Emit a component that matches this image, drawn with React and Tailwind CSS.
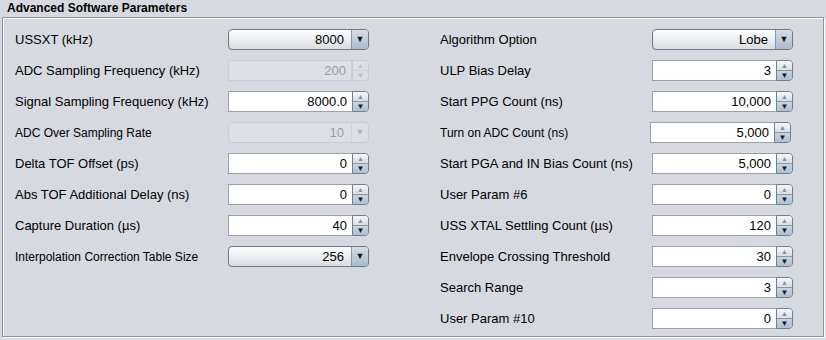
import React from 'react';

const font = { fontFamily: '"Liberation Sans", Arial, sans-serif' };

const leftRows = [
  { label: 'USSXT (kHz)', kind: 'combo', value: '8000' },
  { label: 'ADC Sampling Frequency (kHz)', kind: 'spin', value: '200', disabled: true },
  { label: 'Signal Sampling Frequency (kHz)', kind: 'spin', value: '8000.0' },
  { label: 'ADC Over Sampling Rate', kind: 'combo', value: '10', disabled: true, small: true },
  { label: 'Delta TOF Offset (ps)', kind: 'spin', value: '0' },
  { label: 'Abs TOF Additional Delay (ns)', kind: 'spin', value: '0' },
  { label: 'Capture Duration (µs)', kind: 'spin', value: '40' },
  { label: 'Interpolation Correction Table Size', kind: 'combo', value: '256', small: true },
];

const rightRows = [
  { label: 'Algorithm Option', kind: 'combo', value: 'Lobe' },
  { label: 'ULP Bias Delay', kind: 'spin', value: '3' },
  { label: 'Start PPG Count (ns)', kind: 'spin', value: '10,000' },
  { label: 'Turn on ADC Count (ns)', kind: 'spin', value: '5,000', small: true, shift: true },
  { label: 'Start PGA and IN Bias Count (ns)', kind: 'spin', value: '5,000' },
  { label: 'User Param #6', kind: 'spin', value: '0' },
  { label: 'USS XTAL Settling Count (µs)', kind: 'spin', value: '120' },
  { label: 'Envelope Crossing Threshold', kind: 'spin', value: '30' },
  { label: 'Search Range', kind: 'spin', value: '3' },
  { label: 'User Param #10', kind: 'spin', value: '0' },
];

function Spin({ value, disabled }) {
  return (
    <div className="flex h-[21px] w-[141px]">
      <div
        className={
          'flex-1 flex items-center justify-end pr-[5px] text-[13px] border ' +
          (disabled
            ? 'bg-[#dcdfe4] border-[#c9ccd2] text-[#9a9da3]'
            : 'bg-white border-[#9aa0a8] border-r-0 text-black')
        }
      >
        {value}
      </div>
      <div
        className={
          'w-[17px] flex flex-col border rounded-r-[4px] overflow-hidden ' +
          (disabled ? 'border-[#c9ccd2] bg-[#dcdfe4]' : 'border-[#6f7f8f]')
        }
      >
        <div
          className={
            'flex-1 flex items-center justify-center text-[7px] leading-none ' +
            (disabled ? 'text-[#bfc2c8]' : 'bg-gradient-to-b from-[#f4f6f8] to-[#d8dee5] text-[#8a8f96]')
          }
        >
          ▲
        </div>
        <div
          className={
            'flex-1 flex items-center justify-center text-[8px] leading-none ' +
            (disabled ? 'text-[#bfc2c8] border-t border-[#d0d3d8]' : 'bg-gradient-to-b from-[#c9d6e2] to-[#aebfcf] text-[#1a1a1a] border-t border-[#8797a6]')
          }
        >
          ▼
        </div>
      </div>
    </div>
  );
}

function Combo({ value, disabled }) {
  return (
    <div
      className={
        'flex h-[21px] w-[141px] rounded-[4px] border overflow-hidden ' +
        (disabled ? 'border-[#c9ccd2] bg-[#dcdfe4]' : 'border-[#6f7780] bg-gradient-to-b from-[#fbfcfd] via-[#eceef1] to-[#d9dce1]')
      }
    >
      <div
        className={
          'flex-1 flex items-center justify-end pr-[7px] text-[13px] ' +
          (disabled ? 'text-[#9a9da3]' : 'text-black')
        }
      >
        {value}
      </div>
      <div
        className={
          'w-[17px] flex items-center justify-center text-[9px] border-l ' +
          (disabled
            ? 'border-[#d0d3d8] text-[#b0b3b9]'
            : 'border-[#8797a6] bg-gradient-to-b from-[#d3dde7] to-[#a9bccd] text-[#1a1a1a]')
        }
      >
        ▼
      </div>
    </div>
  );
}

function Row({ row, labelWidth }) {
  return (
    <div className="flex items-center h-[31px]">
      <div
        className={(row.small ? 'text-[12px]' : 'text-[13px]') + ' text-black whitespace-nowrap'}
        style={{ width: row.shift ? labelWidth - 2 : labelWidth }}
      >
        {row.label}
      </div>
      {row.kind === 'combo' ? (
        <Combo value={row.value} disabled={row.disabled} />
      ) : (
        <Spin value={row.value} disabled={row.disabled} />
      )}
    </div>
  );
}

export default function App() {
  return (
    <div className="w-[826px] h-[340px] bg-[#d6d9df] relative" style={font}>
      <div className="pl-[7px] h-[17px] text-[12px] font-bold leading-[16px] text-black">
        Advanced Software Parameters
      </div>
      <div className="mx-[2px] h-[320px] border border-[#8e939b] shadow-[inset_1px_1px_0_#ffffff,1px_1px_0_#ffffff] flex pt-[6px] pl-[12px]">
        <div className="flex flex-col w-[425px]">
          {leftRows.map((r) => (
            <Row key={r.label} row={r} labelWidth={213} />
          ))}
        </div>
        <div className="flex flex-col">
          {rightRows.map((r) => (
            <Row key={r.label} row={r} labelWidth={212} />
          ))}
        </div>
      </div>
    </div>
  );
}
